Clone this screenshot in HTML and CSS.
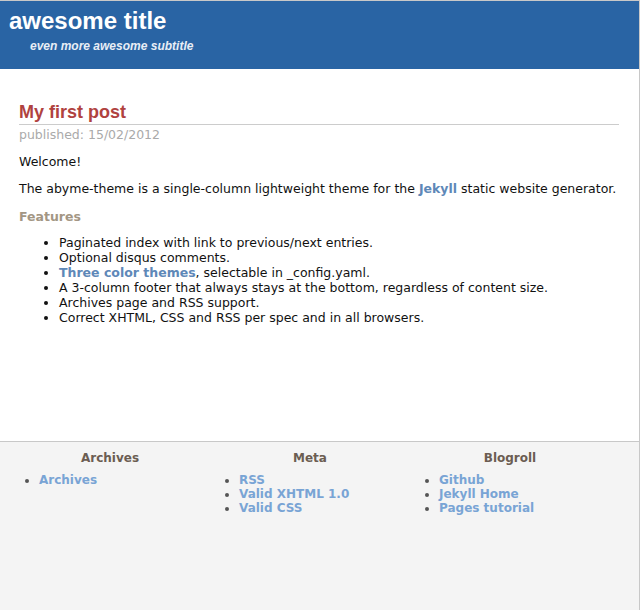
FILE: index.html
```html
<!DOCTYPE html>
<html>
<head>
<meta charset="utf-8">
<title>awesome title</title>
<link rel="stylesheet" href="styles.css">
</head>
<body>
<div class="page">
  <header class="masthead">
    <h1 class="site-title">awesome title</h1>
    <p class="site-subtitle">even more awesome subtitle</p>
  </header>
  <main class="content">
    <h2 class="post-title">My first post</h2>
    <p class="post-meta">published: 15/02/2012</p>
    <p class="para">Welcome!</p>
    <p class="para">The abyme-theme is a single-column lightweight theme for the <a class="link" href="#">Jekyll</a> static website generator.</p>
    <h3 class="section-title">Features</h3>
    <ul class="features">
      <li>Paginated index with link to previous/next entries.</li>
      <li>Optional disqus comments.</li>
      <li><a class="link" href="#">Three color themes</a>, selectable in _config.yaml.</li>
      <li>A 3-column footer that always stays at the bottom, regardless of content size.</li>
      <li>Archives page and RSS support.</li>
      <li>Correct XHTML, CSS and RSS per spec and in all browsers.</li>
    </ul>
  </main>
  <footer class="footer">
    <div class="footer-col">
      <h4 class="footer-title">Archives</h4>
      <ul class="footer-list">
        <li><a class="footer-link" href="#">Archives</a></li>
      </ul>
    </div>
    <div class="footer-col">
      <h4 class="footer-title">Meta</h4>
      <ul class="footer-list">
        <li><a class="footer-link" href="#">RSS</a></li>
        <li><a class="footer-link" href="#">Valid XHTML 1.0</a></li>
        <li><a class="footer-link" href="#">Valid CSS</a></li>
      </ul>
    </div>
    <div class="footer-col">
      <h4 class="footer-title">Blogroll</h4>
      <ul class="footer-list">
        <li><a class="footer-link" href="#">Github</a></li>
        <li><a class="footer-link" href="#">Jekyll Home</a></li>
        <li><a class="footer-link" href="#">Pages tutorial</a></li>
      </ul>
    </div>
  </footer>
</div>
</body>
</html>
```
FILE: styles.css
```css
html, body {
  margin: 0;
  padding: 0;
  background: #ffffff;
}

.page {
  box-sizing: border-box;
  min-height: 610px;
  border-top: 1px solid #c8c8c8;
  border-right: 1px solid #c8c8c8;
  display: flex;
  flex-direction: column;
  font-family: "DejaVu Sans", Verdana, sans-serif;
  font-size: 12.5px;
  color: #111111;
}

.masthead {
  background: #2964a4;
  height: 68px;
  box-sizing: border-box;
  padding: 6px 0 0 9px;
  font-family: "Liberation Sans", Arial, sans-serif;
  color: #ffffff;
}

.site-title {
  margin: 0;
  font-size: 24px;
  line-height: 28px;
  font-weight: bold;
}

.site-subtitle {
  margin: 4px 0 0 21px;
  font-size: 12px;
  line-height: 14px;
  font-weight: bold;
  font-style: italic;
  color: #e8eef6;
}

.content {
  flex: 1;
  padding: 32px 20px 0 19px;
}

.post-title {
  margin: 0;
  padding-bottom: 1px;
  font-family: "Liberation Sans", Arial, sans-serif;
  font-size: 18px;
  line-height: 22px;
  font-weight: bold;
  color: #b0423f;
  border-bottom: 1px solid #cccccc;
}

.post-meta {
  margin: 2px 0 12px;
  line-height: 15px;
  color: #aaaaaa;
}

.para {
  margin: 0 0 11.5px;
  line-height: 15px;
}

.link {
  color: #5e88b8;
  font-weight: bold;
  text-decoration: none;
}

.section-title {
  margin: 13px 0 11px;
  font-size: 12.5px;
  line-height: 15px;
  font-weight: bold;
  color: #a39684;
}

.features {
  margin: 0;
  padding-left: 40px;
  line-height: 15px;
}

.footer {
  height: 169px;
  box-sizing: border-box;
  border-top: 1px solid #c8c8c8;
  background: #f4f4f4;
  padding: 9px 0 0 10px;
  display: grid;
  grid-template-columns: 200px 200px 200px;
  align-items: start;
  font-size: 12px;
  line-height: 14px;
  color: #555555;
}

.footer-title {
  margin: 0 0 8px;
  text-align: center;
  font-size: 12px;
  line-height: 14px;
  font-weight: bold;
  color: #6b5d52;
}

.footer-list {
  margin: 0;
  padding-left: 29px;
}

.footer-link {
  color: #79a4d5;
  font-weight: bold;
  text-decoration: none;
}
```
